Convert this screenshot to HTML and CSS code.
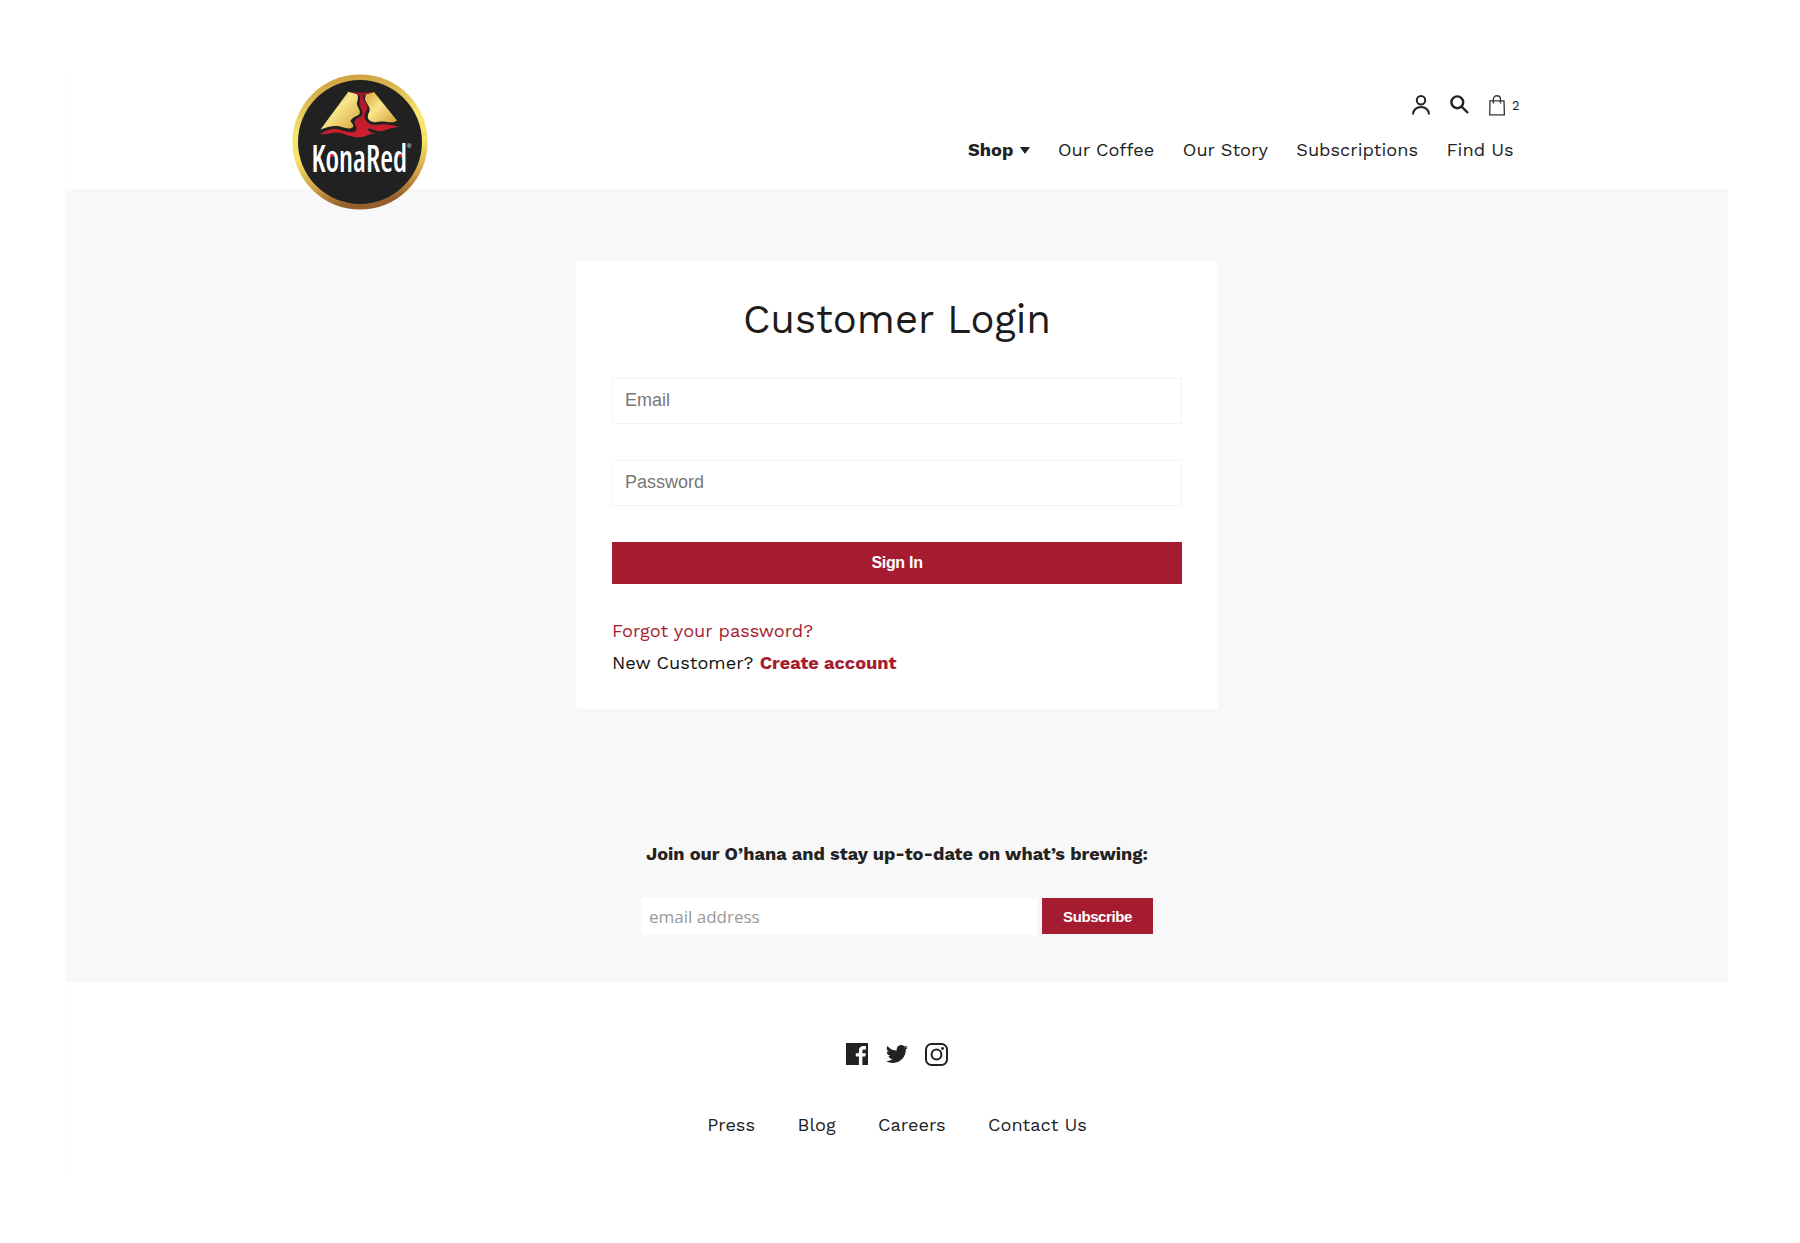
FILE: index.html
```html
<!DOCTYPE html>
<html lang="en">
<head>
<meta charset="utf-8">
<title>Customer Login – KonaRed</title>
<link rel="stylesheet" href="styles.css">
</head>
<body>
<div class="page">
  <header class="header">
    <a class="logo" aria-label="KonaRed">
      <svg width="136" height="136" viewBox="0 0 136 136">
        <defs>
          <linearGradient id="ring" x1="0" y1="0" x2="0.15" y2="1">
            <stop offset="0" stop-color="#c9963c"/><stop offset=".2" stop-color="#dcb850"/><stop offset=".42" stop-color="#f6e570"/><stop offset=".62" stop-color="#f6e26c"/><stop offset=".85" stop-color="#d0a044"/><stop offset="1" stop-color="#96602c"/>
          </linearGradient>
          <linearGradient id="gold" x1="0" y1="0" x2="1" y2="1">
            <stop offset="0" stop-color="#d9a93a"/><stop offset=".45" stop-color="#f9e58a"/><stop offset="1" stop-color="#d2a038"/>
          </linearGradient>
          <linearGradient id="lava" x1="0" y1="0" x2="0" y2="1">
            <stop offset="0" stop-color="#a5182a"/><stop offset="1" stop-color="#d0202c"/>
          </linearGradient>
        </defs>
        <circle cx="68" cy="68" r="67.6" fill="url(#ring)"/>
        <circle cx="68" cy="68" r="62" fill="#222122"/>
        <path fill="url(#gold)" d="M56.300 17.700L65 20.300C67.500 24 64.500 27 65 30.500C66 34 69 37 67.500 40C66 42 60 43 58.500 47C59 49 63 51 60.500 53.500C57 56 53 53.500 47 52.200C41 51.200 35 53 28.500 55.500Z"/>
        <path fill="url(#gold)" d="M73.500 20.500L82 18L105 46.500C102 49 97 48.500 92 47.500C87 47 83 49.500 78.500 47C74 44 76 41 77.500 37C78.500 32 73.500 29 73 25C72.800 23 74 22 73.500 20.500Z"/>
        <path fill="url(#lava)" d="M57.500 17.500C64 19 76 19 82 17.500C79 20 73 19.500 71.500 21.500C69.500 25 75.500 29 75.500 33.500C75.500 37 72 39 72.500 43C73.500 48 78 51.500 84 50.800C91 49.500 99 50 107 53C98 53 93 58 86 57C80 56 77.500 53.500 76 55C75.500 57.500 80 58.500 83 59.500C77 59.500 74 63 68 63.300C57 63.500 51 58 43 58.500C38 58.800 33 61 28 60C35 56 41 53.800 48 55.800C54 57.500 60 60 63.500 57C67 53.500 61 50 63 46.500C65 43.500 71 43 70.500 38.500C70 34 67 33 67.500 28.500C68 25 69 22 66 20.500Z"/>
        <text class="logo-word" x="19.500" y="98.300" textLength="95.500" lengthAdjust="spacingAndGlyphs">KonaRed</text>
        <circle cx="39.800" cy="81.500" r="1.700" fill="#d0202c"/><circle cx="108.300" cy="81.500" r="1.700" fill="#d0202c"/>
        <text class="logo-reg" x="115" y="73.500">®</text>
      </svg>
    </a>
    <div class="header-right">
      <div class="tools">
        <svg class="i-user" width="18" height="20" viewBox="0 0 18 20" fill="none" stroke="#222" stroke-width="2"><circle cx="9" cy="5.200" r="4.200"/><path d="M1 19.500c0-10 16-10 16 0"/></svg>
        <svg class="i-search" width="19" height="19" viewBox="0 0 19 19" fill="none" stroke="#222" stroke-width="2.400"><circle cx="7.300" cy="7.300" r="5.900"/><path d="M11.500 11.500L18 18"/></svg>
        <svg class="i-bag" width="16" height="21" viewBox="0 0 16 21" fill="none" stroke="#333" stroke-width="1.300"><path d="M1 5.800h14l.4 14H.7z"/><path d="M4.300 8.500V4.500c0-5 7.200-5 7.200 0v4"/></svg>
        <span class="count">2</span>
      </div>
      <nav class="nav">
        <a class="shop">Shop<i class="caret"></i></a>
        <a>Our Coffee</a>
        <a>Our Story</a>
        <a>Subscriptions</a>
        <a>Find Us</a>
      </nav>
    </div>
  </header>
  <main class="main">
    <section class="card">
      <h1 class="title">Customer Login</h1>
      <form class="form">
        <div class="field">Email</div>
        <div class="field">Password</div>
        <button class="signin" type="button">Sign In</button>
      </form>
      <p class="line forgot"><a>Forgot your password?</a></p>
      <p class="line">New Customer? <a class="create">Create account</a></p>
    </section>
    <section class="news">
      <h2 class="news-title">Join our O’hana and stay up-to-date on what’s brewing:</h2>
      <div class="news-form">
        <div class="news-input">email address</div>
        <button class="subscribe" type="button">Subscribe</button>
      </div>
    </section>
  </main>
  <footer class="footer">
    <div class="social">
      <svg width="22" height="22" viewBox="0 0 22 22"><path fill="#222" d="M0 0h22v22h-5.600v-8.400h2.900l.5-3.400h-3.400V8.100c0-1 .4-1.700 1.800-1.700h1.800V3.300c-4.500-.8-7.100.7-7.100 4.300v2.600H9.800v3.400h3.100V22H0z"/></svg>
      <svg width="22" height="18" viewBox="0 0 24 19.500"><path fill="#222" d="M23.950 2.300a10 10 0 0 1-2.820.78 4.960 4.960 0 0 0 2.160-2.730c-.95.560-2 .970-3.130 1.190a4.920 4.920 0 0 0-8.380 4.480A13.900 13.900 0 0 1 1.640.9a4.920 4.920 0 0 0 1.520 6.570 4.900 4.900 0 0 1-2.230-.62v.06a4.920 4.920 0 0 0 3.950 4.830 5 5 0 0 1-2.220.080 4.940 4.940 0 0 0 4.600 3.420A9.870 9.870 0 0 1 0 17.270a14 14 0 0 0 7.550 2.210c9.050 0 14-7.500 14-13.980 0-.21 0-.42-.02-.63a9.900 9.900 0 0 0 2.460-2.550z"/></svg>
      <svg width="23" height="23" viewBox="0 0 23 23" fill="none" stroke="#222" stroke-width="2"><rect x="1" y="1" width="21" height="21" rx="5.500"/><circle cx="11.500" cy="11.500" r="4.900"/><circle cx="17.500" cy="5.500" r="1.400" fill="#222" stroke="none"/></svg>
    </div>
    <nav class="links">
      <a>Press</a><a>Blog</a><a>Careers</a><a>Contact Us</a>
    </nav>
  </footer>
</div>
</body>
</html>
```
FILE: styles.css
```css
* { box-sizing: border-box; }
body { margin: 0; background: #fff; color: #222; font-family: "Work Sans", Inter, sans-serif; font-size: 18.2px; }
h1, h2, p { margin: 0; font-weight: 400; }
.page { width: 1662px; margin: 66px 0 0 66px; height: 1116px; box-shadow: -1px 0 0 #fdfdfd; }
.header { height: 123px; display: flex; justify-content: space-between; padding: 8px 208px 0 226px; }
.logo { display: block; width: 136px; height: 136px; position: relative; z-index: 1; }
.logo svg { display: block; overflow: visible; }
.logo-word { font-family: "Open Sans", sans-serif; font-stretch: condensed; font-size: 38.5px; font-weight: 600; fill: #fff; }
.logo-reg { font-family: "Liberation Sans", sans-serif; font-size: 6px; fill: #fff; }
.header-right { width: 552px; flex: none; }
.tools { display: flex; align-items: flex-start; justify-content: flex-end; height: 44px; padding: 21px 0 0; }
.i-search { margin-left: 19.5px; }
.i-bag { margin-left: 20.5px; }
.count { font-size: 13px; line-height: 21px; margin-left: 7px; width: 8px; }
.nav { display: flex; white-space: nowrap; gap: 28.5px; line-height: 22px; margin-top: 20.5px; }
.shop { display: flex; font-weight: 700; width: 61.5px; justify-content: space-between; }
.caret { border: 5.5px solid transparent; border-top: 7.5px solid #222; border-bottom: 0; height: 7.5px; margin-top: 8.5px; }
.main { background: #f8f8f8; height: 793px; padding-top: 71.5px; display: flex; flex-direction: column; align-items: center; }
.card { background: #fff; width: 642px; height: 448.5px; padding: 36.5px 36px 0; border-radius: 2px; }
.title { font-size: 40px; line-height: 46px; text-align: center; white-space: nowrap; color: #1c1c1c; }
.form { display: flex; flex-direction: column; gap: 36px; margin-top: 35px; }
.field { height: 46px; border: 1px solid #f4f4f4; padding: 0 12px; font: 18px/43px "Liberation Sans", sans-serif; color: #777; }
.signin, .subscribe { border: 0; background: #a51c30; color: #fff; font: 700 16px "Liberation Sans", sans-serif; letter-spacing: -.3px; padding: 0; white-space: nowrap; }
.signin { height: 42px; }
.line { line-height: 32px; color: #111; white-space: nowrap; }
.line a { color: #a51c30; }
.forgot { margin-top: 31px; }
.create { font-weight: 700; }
.news { margin-top: 133px; width: 512px; }
.news-title { font-size: 18.15px; font-weight: 700; text-align: center; line-height: 24px; white-space: nowrap; }
.news-form { display: flex; justify-content: space-between; margin-top: 32px; }
.news-input { background: #fff; width: 396px; height: 37px; padding-left: 8px; font: 17px/37px "Open Sans", sans-serif; color: #999; }
.subscribe { width: 111px; height: 36px; font-size: 15px; letter-spacing: -.4px; }
.footer { padding-top: 60.5px; }
.social { display: flex; justify-content: center; align-items: center; gap: 17.5px; }
.links { display: flex; justify-content: center; gap: 42.5px; margin-top: 47px; line-height: 24px; white-space: nowrap; }
```
